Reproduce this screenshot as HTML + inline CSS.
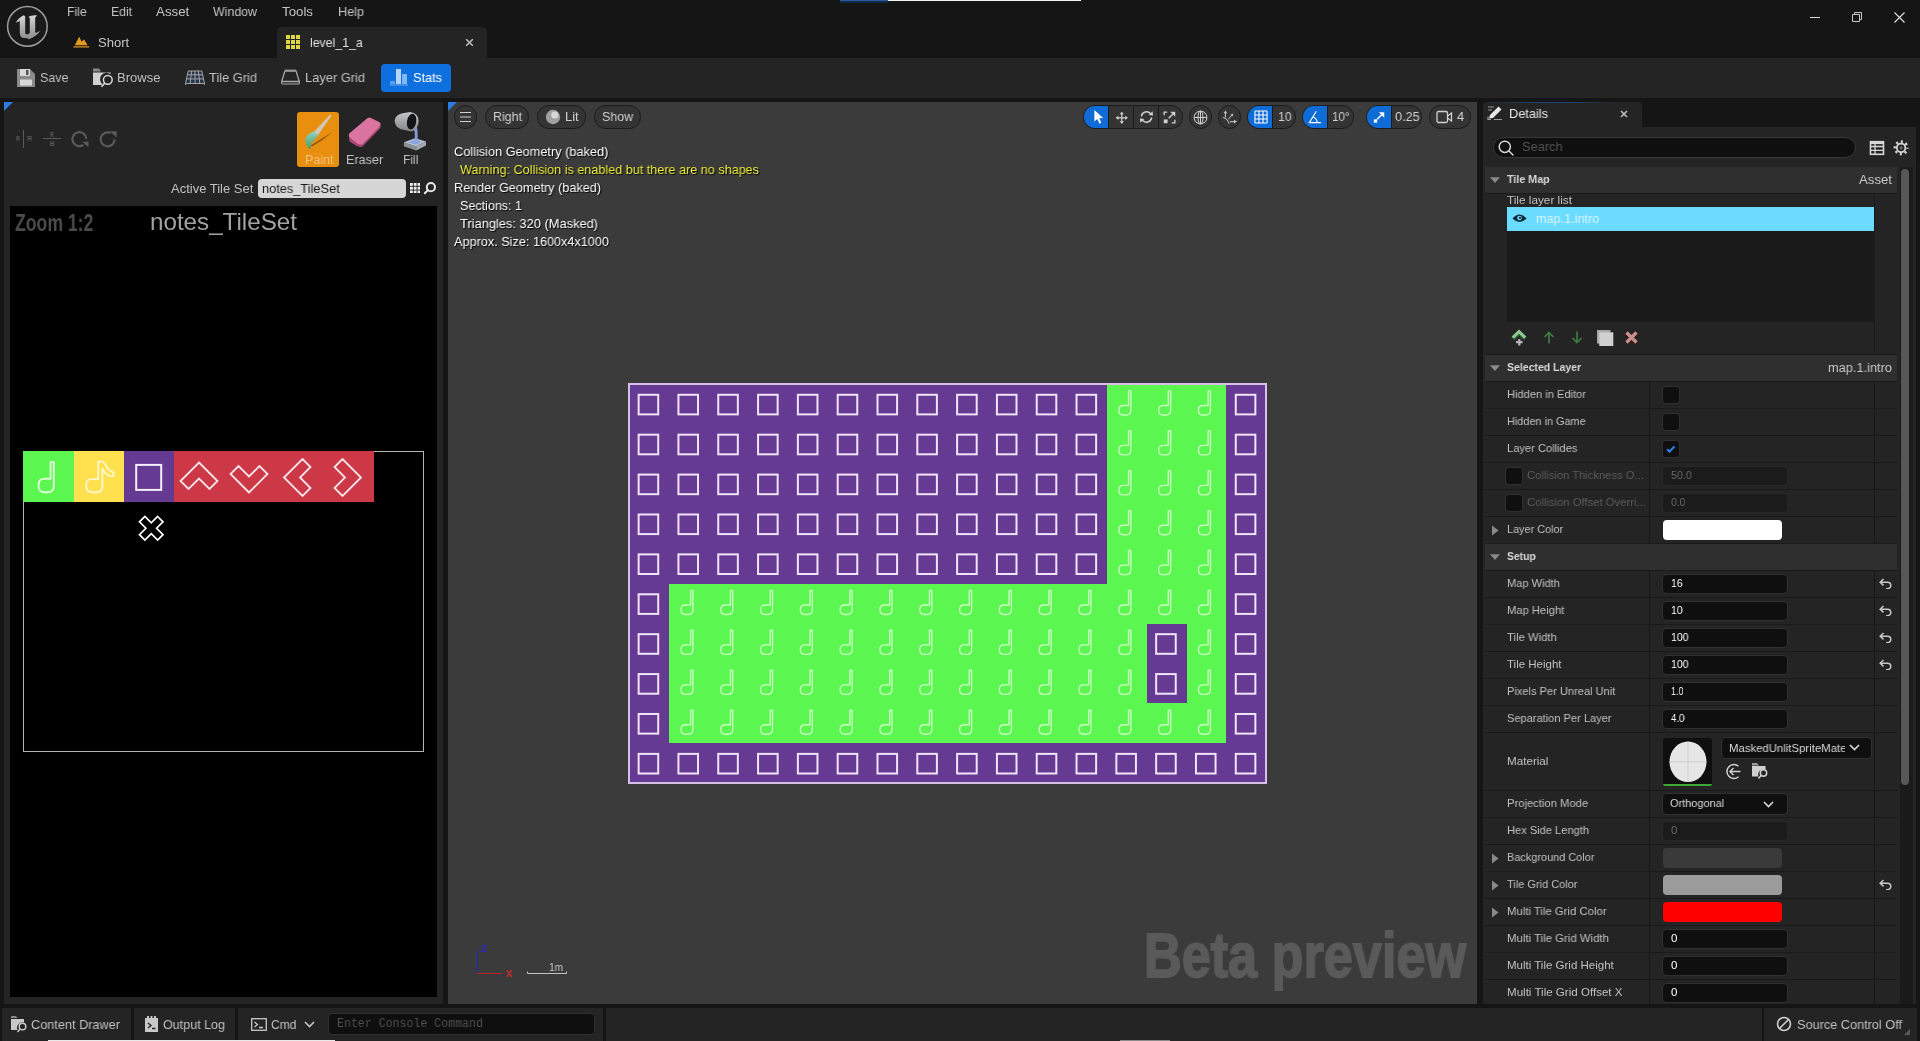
<!DOCTYPE html>
<html lang="en"><head><meta charset="utf-8"><title>level_1_a - Unreal Editor</title>
<style>
html,body{margin:0;padding:0;background:#151515;}
body{width:1920px;height:1041px;position:relative;overflow:hidden;font-family:"Liberation Sans",sans-serif;}
.g{position:absolute;left:0;top:0;width:0;height:0;display:block;}
.g>div,.g>svg,.g>span{position:absolute;}
span.t{will-change:transform;white-space:nowrap;line-height:20px;height:20px;transform-origin:0 50%;display:block;}

</style></head>
<body>
<header class="g" aria-label="Title bar and toolbar">
<div style="left:0px;top:0px;width:1920px;height:58px;background:#151515;"></div>
<div style="left:840px;top:0px;width:48px;height:1px;background:#2a5ea8;"></div>
<div style="left:840px;top:1px;width:48px;height:2px;background:#13294a;"></div>
<div style="left:888px;top:0px;width:193px;height:1px;background:#f4f4f4;"></div>
<svg style="left:0px;top:0px" width="54" height="54" viewBox="0 0 54 54"><defs><linearGradient id="lg" x1="0" y1="0" x2="0" y2="1"><stop offset="0" stop-color="#d4d4d4"/><stop offset="1" stop-color="#8c8c8c"/></linearGradient></defs><circle cx="27.400" cy="26.400" r="19.800" fill="#1a1a1a" stroke="#9c9c9c" stroke-width="1.500"/><path fill="url(#lg)" d="M15.500 23C17.500 19.500 20.500 16.500 23.800 15.200L25.200 16.600V32.200C25.200 34.200 26.500 34.800 28 34.200L29.800 33V18.800C29.800 17.600 29.200 17.200 28.200 17C30.500 15.600 34 14.800 37.200 15.400C35.800 16.200 35.200 17.200 35.200 18.600V31.500C35.200 32.600 36 33 37 32.600L40.200 30.800C38 34.500 33.500 37.500 29 39.300C27.500 38.200 26 37.800 24.500 38C21.500 38.200 19.800 36.200 19.800 33V21.200C18.500 21.400 17 22 15.500 23Z"/></svg>
<svg style="left:73px;top:34px" width="18" height="16" viewBox="0 0 18 16"><path d="M1.800 11.200 6.200 2.800 8.600 7.600 11.200 5.400 14.600 11.200z" fill="#e09a22"/><rect x=".5" y="12" width="15.700" height="1.700" fill="#a8741c"/></svg>
<div style="left:277px;top:27px;width:210px;height:31px;background:#242424;border-radius:5px 5px 0 0;"></div>
<svg style="left:286px;top:35px" width="15" height="15" viewBox="0 0 15 15" fill="#ddd642"><rect x="0" y="0" width="4" height="4"/><rect x="5" y="0" width="4" height="4"/><rect x="10" y="0" width="4" height="4"/><rect x="0" y="5" width="4" height="4"/><rect x="5" y="5" width="4" height="4"/><rect x="10" y="5" width="4" height="4"/><rect x="0" y="10" width="4" height="4"/><rect x="5" y="10" width="4" height="4"/><rect x="10" y="10" width="4" height="4"/></svg>
<svg style="left:465px;top:38px" width="9" height="9" viewBox="0 0 9 9"><path d="M1.200 1.200 7.800 7.800M7.800 1.200 1.200 7.800" stroke="#c0c0c0" stroke-width="1.5"/></svg>
<div style="left:1810px;top:17px;width:10.2px;height:1px;background:#d8d8d8;"></div>
<svg style="left:1852px;top:12px" width="10" height="10" viewBox="0 0 10 10" fill="none" stroke="#c8c8c8" stroke-width="1" stroke-linejoin="round"><rect x=".5" y="2.500" width="7" height="7"/><path d="M2.500 2.500V.5H9.500V7.500H7.500"/></svg>
<svg style="left:1894px;top:12px" width="11" height="11" viewBox="0 0 11 11"><path d="M.5.500 10.500 10.500M10.500.5.500 10.500" stroke="#e0e0e0" stroke-width="1.100"/></svg>
<div style="left:0px;top:58px;width:1920px;height:40px;background:#242424;"></div>
<svg style="left:17px;top:69px" width="18" height="18" viewBox="0 0 18 18"><path d="M0 0h13l5 5v13H0z" fill="#8a8a8a"/><rect x="3" y="0" width="10" height="7" fill="#d8d8d8"/><rect x="9" y="1" width="2.500" height="5" fill="#555"/><rect x="3" y="10.500" width="12" height="6" fill="#d8d8d8"/></svg>
<svg style="left:92px;top:67px" width="23" height="23" viewBox="0 0 23 23"><path d="M1 1.500h6l2 3H1z" fill="#8a8a8a"/><path d="M1 5.500h17.500v1.800a6.300 6.300 0 0 0-8.200 9.700l-1 1H1z" fill="#d0d0d0"/><circle cx="15.800" cy="12.800" r="4.400" fill="none" stroke="#d8d8d8" stroke-width="1.500"/><path d="M12.600 16.200 9.500 19.800" stroke="#d8d8d8" stroke-width="1.700"/></svg>
<svg style="left:185px;top:69px" width="20" height="17" viewBox="0 0 20 17" fill="none" stroke="#a4a4a4" stroke-width="1"><path d="M3.200 2h13.600l2.700 12.500H.5z" fill="#26344c"/><path d="M2.600 5.800h14.800M1.600 9.900h16.800M6.600 2 5.200 14.500M10 2v12.500M13.400 2l1.400 12.500"/><path d="M.5 14.500v1.500M19.500 14.500v1.500"/></svg>
<svg style="left:281px;top:69px" width="19" height="17" viewBox="0 0 19 17" fill="none" stroke="#a8a8a8"><path d="M4 1.800h11l3.300 10.700H.7z" stroke-width="1.300"/><path d="M4 1.600h11" stroke-width="2" stroke="#9a9a9a"/><path d="M.7 12.500v2.500h17.600v-2.500" stroke-width="1"/></svg>
<div style="left:381px;top:64px;width:70px;height:28px;background:#0e6fde;border-radius:4px;"></div>
<svg style="left:390px;top:68px" width="19" height="19" viewBox="0 0 19 19"><path d="M0 13h5v5H0z" fill="#5aa2ee"/><path d="M6 1h5v17H6z" fill="#b5d5f8"/><path d="M12 6h5v12h-5z" fill="#7fb8f2"/><path d="M0 16h18v2H0z" fill="#3f8de6"/></svg>
<div style="left:0px;top:98px;width:1920px;height:909px;background:#151515;"></div>
<span class="t" style="left:67px;top:1.50px;font-size:13px;color:#c4c4c4;transform:scaleX(0.9402);">File</span>
<span class="t" style="left:111px;top:1.50px;font-size:13px;color:#c4c4c4;transform:scaleX(0.9372);">Edit</span>
<span class="t" style="left:156px;top:1.50px;font-size:13px;color:#c4c4c4;transform:scaleX(1.0241);">Asset</span>
<span class="t" style="left:213.3px;top:1.50px;font-size:13px;color:#c4c4c4;transform:scaleX(0.9514);">Window</span>
<span class="t" style="left:282.3px;top:1.50px;font-size:13px;color:#c4c4c4;transform:scaleX(1.0211);">Tools</span>
<span class="t" style="left:338px;top:1.50px;font-size:13px;color:#c4c4c4;transform:scaleX(0.9720);">Help</span>
<span class="t" style="left:98.3px;top:32.50px;font-size:13px;color:#c4c4c4;transform:scaleX(0.9975);">Short</span>
<span class="t" style="left:310px;top:32.50px;font-size:13px;color:#e0e0e0;transform:scaleX(0.9469);">level_1_a</span>
<span class="t" style="left:40.3px;top:67.50px;font-size:13px;color:#c0c0c0;transform:scaleX(0.9581);">Save</span>
<span class="t" style="left:117.3px;top:67.50px;font-size:13px;color:#c0c0c0;transform:scaleX(1.0009);">Browse</span>
<span class="t" style="left:209.3px;top:67.50px;font-size:13px;color:#c0c0c0;transform:scaleX(0.9868);">Tile Grid</span>
<span class="t" style="left:305.3px;top:67.50px;font-size:13px;color:#c0c0c0;transform:scaleX(0.9884);">Layer Grid</span>
<span class="t" style="left:413.3px;top:67.50px;font-size:13px;color:#ffffff;transform:scaleX(0.9789);">Stats</span>
</header>
<aside class="g" aria-label="Tile set palette">
<div style="left:4px;top:102px;width:439px;height:902px;background:#242424;"></div>
<svg style="left:4px;top:102px" width="9" height="9"><path d="M0 0h9L0 9z" fill="#2b7be0"/></svg>
<div style="left:23.2px;top:130px;width:1.2px;height:18px;background:#5a5a5a;"></div>
<div style="left:42.5px;top:138px;width:18px;height:1.2px;background:#5a5a5a;"></div>
<svg style="left:70px;top:129px" width="21" height="21" viewBox="0 0 21 21" fill="none" stroke="#5a5a5a" stroke-width="2.200"><path d="M13.500 15.800A7 7 0 1 1 16.400 10"/><path d="M12.200 12.800h6.300v5.400z" fill="#5a5a5a" stroke="none"/></svg>
<svg style="left:98px;top:129px" width="21" height="21" viewBox="0 0 21 21" fill="none" stroke="#5a5a5a" stroke-width="2.200"><path d="M12.600 4A7 7 0 1 0 16.600 10.400"/><path d="M12 2.200h6.600v6.400z" fill="#5a5a5a" stroke="none"/></svg>
<div style="left:297px;top:112px;width:42px;height:55px;background:#e88f10;border-radius:3px;"></div>
<svg style="left:297px;top:112px" width="42" height="42" viewBox="0 0 42 42"><defs><linearGradient id="br" x1="0" y1="0" x2="0" y2="1"><stop offset="0" stop-color="#8fd0c0"/><stop offset="1" stop-color="#4f9a58"/></linearGradient></defs><path d="M13.500 33.500 Q24 27 35.600 20 Q26 28.500 15 34.500z" fill="#7a4a0c" opacity=".8"/><path d="M16.600 20.200 L33.200 2.400 L34.600 3.400 L20.800 23.600z" fill="#cfc8b6"/><path d="M17 19.500 Q8.500 22 8.200 28 Q8.600 34 13.300 37.400 Q13 31 21.500 23.200z" fill="url(#br)"/></svg>
<svg style="left:346px;top:114px" width="38" height="36" viewBox="0 0 38 36"><path d="M3 24 L3.500 27.500 Q12 33.500 16 33 L34.500 14 L34.500 10.500 Z" fill="#a84872"/><path d="M3 23 Q2 20 5 18 L21 4.500 Q23 3 25 4 L33 8 Q35.500 9.500 34 12 L17 29.500 Q15 31 12 30 Z" fill="#dc74a2"/></svg>
<svg style="left:393px;top:110px" width="36" height="42" viewBox="0 0 36 42"><defs><linearGradient id="bk" x1="0" y1="0" x2="0" y2="1"><stop offset="0" stop-color="#c4c4c6"/><stop offset="1" stop-color="#84868a"/></linearGradient></defs><path d="M10.900 32.300 23.200 36.400 23.200 40.400 10.900 36.200z" fill="#8a9096"/><path d="M23.200 36.400 33 31.600 33 35.600 23.200 40.400z" fill="#a4aab0"/><path d="M10.900 32.300 22 28.300 33 31.600 23.200 36.400z" fill="#b8c2d0"/><path d="M14.800 32.300 22 29.700 29.300 31.700 23.100 34.700z" fill="#8aa4de"/><path d="M19.400 16 Q22.500 20 21.600 31 L24.600 31 Q25.200 21 23.400 15z" fill="#88a2e4" opacity=".92"/><path d="M1.700 10.500 Q2.500 4.500 9.500 3.200 L17 2.100 Q25.500 3 25.600 11.500 Q25 19.500 18.500 21.600 L8 19.200 Q1.500 16.500 1.700 10.500z" fill="url(#bk)"/><ellipse cx="18.600" cy="11.600" rx="4.600" ry="8" fill="#121418" transform="rotate(10 18.600 11.600)"/></svg>
<div style="left:258px;top:179px;width:148px;height:19px;background:#d6d6d6;border-radius:4px;"></div>
<svg style="left:410px;top:183px" width="10.400" height="10.400" viewBox="0 0 11 11" fill="#f0f0f0"><rect x="0" y="0" width="3" height="3"/><rect x="4" y="0" width="3" height="3"/><rect x="8" y="0" width="3" height="3"/><rect x="0" y="4" width="3" height="3"/><rect x="4" y="4" width="3" height="3"/><rect x="8" y="4" width="3" height="3"/><rect x="0" y="8" width="3" height="3"/><rect x="4" y="8" width="3" height="3"/><rect x="8" y="8" width="3" height="3"/></svg>
<svg style="left:423px;top:181px" width="14" height="14" viewBox="0 0 14 14" fill="none" stroke="#e8e8e8" stroke-width="2"><circle cx="7.900" cy="6.200" r="4.100"/><path d="M4.800 9.300 1.800 12.300" stroke-linecap="round"/></svg>
<div style="left:10px;top:206px;width:427px;height:791px;background:#000000;"></div>
<div style="left:23px;top:451px;width:400.8px;height:301px;background:transparent;box-sizing:border-box;border:1px solid #b4b4b4;"></div>
<div style="left:23.1px;top:451px;width:50.65px;height:51px;background:#5cf650;"></div>
<div style="left:73.75px;top:451px;width:50.2px;height:51px;background:#ffe14f;"></div>
<div style="left:123.75px;top:451px;width:50.2px;height:51px;background:#653a92;"></div>
<div style="left:173.75px;top:451px;width:50.2px;height:51px;background:#cc3846;"></div>
<div style="left:223.75px;top:451px;width:50.2px;height:51px;background:#cc3846;"></div>
<div style="left:273.75px;top:451px;width:50.2px;height:51px;background:#cc3846;"></div>
<div style="left:323.75px;top:451px;width:50.2px;height:51px;background:#cc3846;"></div>
<svg style="left:23.2px;top:451.5px" width="50" height="50" viewBox="0 0 50 50" fill="none" stroke="#dfffd8" stroke-width="1.90" stroke-linejoin="round"><path d="M27.600 9.900h3.200v24.400q0 6-6 6h-3.200q-6 0-6-6v-1.500q0-6 6-6h6z"/></svg>
<svg style="left:73.500px;top:451.500px" width="50" height="50" viewBox="0 0 50 50" fill="none" stroke="#fff7d0" stroke-width="1.800" stroke-linejoin="round"><path d="M24.200 9.600h4.200l2.600 2 2.800 5.400 5.600 3.400v3.800h-3.600l-4.600-3.200-2.800-4.200v17.500q0 6-6 6h-4.200q-6 0-6-6v-1.200q0-6 6-6h6z"/></svg>
<svg style="left:123.500px;top:451.500px" width="50" height="50" viewBox="0 0 50 50" fill="none" stroke="#f6eefc" stroke-width="2"><rect x="12.200" y="12.900" width="25" height="25"/></svg>
<svg style="left:173.5px;top:451.5px" width="50" height="50" viewBox="0 0 50 50" fill="none" stroke="#fbe6ea" stroke-width="1.800" stroke-linejoin="miter"><path transform="rotate(0 25 25.500)" d="M25 10.500 43.500 29 35.500 37 25 26.500 14.500 37 6.500 29z"/></svg>
<svg style="left:223.5px;top:451.5px" width="50" height="50" viewBox="0 0 50 50" fill="none" stroke="#fbe6ea" stroke-width="1.800" stroke-linejoin="miter"><path transform="rotate(180 25 25.500)" d="M25 10.500 43.500 29 35.500 37 25 26.500 14.500 37 6.500 29z"/></svg>
<svg style="left:274.3px;top:451.5px" width="50" height="50" viewBox="0 0 50 50" fill="none" stroke="#fbe6ea" stroke-width="1.800" stroke-linejoin="miter"><path transform="rotate(-90 25 25.500)" d="M25 10.500 43.500 29 35.500 37 25 26.500 14.500 37 6.500 29z"/></svg>
<svg style="left:321px;top:451.5px" width="50" height="50" viewBox="0 0 50 50" fill="none" stroke="#fbe6ea" stroke-width="1.800" stroke-linejoin="miter"><path transform="rotate(90 25 25.500)" d="M25 10.500 43.500 29 35.500 37 25 26.500 14.500 37 6.500 29z"/></svg>
<svg style="left:137px;top:514.200px" width="28.500" height="28.500" viewBox="0 0 30 30" fill="#000" stroke="#ffffff" stroke-width="1.800" stroke-linejoin="miter"><path transform="rotate(45 15 15)" d="M11 1.500h8v9.500h9.500v8h-9.500v9.500h-8v-9.500h-9.500v-8h9.500z"/></svg>
<span class="t" style="left:16.3px;top:129.20px;font-size:6.5px;color:#5a5a5a;font-weight:700;transform:scaleX(0.8505);">R</span>
<span class="t" style="left:27px;top:129.20px;font-size:6.5px;color:#5a5a5a;font-weight:700;transform:scaleX(0.8505);transform:scaleX(-1);transform-origin:50% 50%;">R</span>
<span class="t" style="left:49.7px;top:124.60px;font-size:6.5px;color:#5a5a5a;font-weight:700;transform:scaleX(0.8505);">R</span>
<span class="t" style="left:49.7px;top:133.20px;font-size:6.5px;color:#5a5a5a;font-weight:700;transform:scaleX(0.8505);transform:scaleY(-1);transform-origin:50% 50%;">R</span>
<span class="t" style="left:304.7px;top:149.50px;font-size:13px;color:#f4c27c;transform:scaleX(0.9615);">Paint</span>
<span class="t" style="left:346px;top:149.50px;font-size:13px;color:#c0c0c0;transform:scaleX(0.9687);">Eraser</span>
<span class="t" style="left:403.3px;top:149.50px;font-size:13px;color:#c0c0c0;transform:scaleX(0.9272);">Fill</span>
<span class="t" style="left:171px;top:178.50px;font-size:13px;color:#c0c0c0;transform:scaleX(0.9991);">Active Tile Set</span>
<span class="t" style="left:262.3px;top:178.50px;font-size:13px;color:#1a1a1a;transform:scaleX(0.9833);">notes_TileSet</span>
<span class="t" style="left:15px;top:212.80px;font-size:23px;color:#4b4b4b;font-weight:700;transform:scaleX(0.7659);">Zoom 1:2</span>
<span class="t" style="left:149.7px;top:211.50px;font-size:24px;color:#a2a2a2;transform:scaleX(1.0077);">notes_TileSet</span>
</aside>
<main class="g" aria-label="Tile map viewport">
<div style="left:448px;top:102px;width:1029px;height:902px;background:#3b3b3b;"></div>
<svg style="left:448px;top:102px" width="9" height="9"><path d="M0 0h9L0 9z" fill="#2b7be0"/></svg>
<div style="left:454px;top:105.2px;width:23px;height:23.4px;background:#343434;box-sizing:border-box;border:1px solid #1b1b1b;border-radius:11.700px;overflow:hidden;"></div>
<svg style="left:459px;top:111px" width="13" height="12" viewBox="0 0 13 12" stroke="#d0d0d0" stroke-width="1.100"><path d="M1 1.500h11M1 6h11M1 10.500h11"/></svg>
<div style="left:485.3px;top:105.2px;width:43.69999999999999px;height:23.4px;background:#343434;box-sizing:border-box;border:1px solid #1b1b1b;border-radius:11.700px;overflow:hidden;"></div>
<div style="left:537.3px;top:105.2px;width:48.40000000000009px;height:23.4px;background:#343434;box-sizing:border-box;border:1px solid #1b1b1b;border-radius:11.700px;overflow:hidden;"></div>
<svg style="left:545px;top:109px" width="16" height="16" viewBox="0 0 16 16"><circle cx="8" cy="8" r="7.200" fill="#a0a0a0"/><circle cx="9.800" cy="6" r="3.600" fill="#d8d8d8"/></svg>
<div style="left:594.3px;top:105.2px;width:46.700000000000045px;height:23.4px;background:#343434;box-sizing:border-box;border:1px solid #1b1b1b;border-radius:11.700px;overflow:hidden;"></div>
<div style="left:1083px;top:105.2px;width:99.59999999999991px;height:23.4px;background:#343434;box-sizing:border-box;border:1px solid #1b1b1b;border-radius:11.700px;overflow:hidden;"></div>
<div style="left:1084px;top:106.2px;width:24.299999999999955px;height:21.4px;background:#0f6bd6;border-radius:10.700px 0 0 10.700px;"></div>
<div style="left:1108.3px;top:106.2px;width:1px;height:21.4px;background:#1b1b1b;"></div>
<div style="left:1133.4px;top:106px;width:1px;height:22px;background:#1b1b1b;"></div>
<div style="left:1158.2px;top:106px;width:1px;height:22px;background:#1b1b1b;"></div>
<svg style="left:1092.800px;top:108.800px" width="12" height="16" viewBox="0 0 13 17"><path d="M1.500 1v12.500l3.200-2.800 2.300 5 2-1-2.300-4.800 4.300-.2z" fill="#ffffff"/></svg>
<svg style="left:1114.800px;top:110.600px" width="13.600" height="13.600" viewBox="0 0 17 17" fill="none" stroke="#d0d0d0" stroke-width="1.500"><path d="M8.500 3.500v10M3.500 8.500h10"/><path d="M5.800 4.200 8.500 .8l2.700 3.400zM5.800 12.800l2.700 3.400 2.700-3.400zM4.200 5.800.8 8.500l3.400 2.700zM12.800 5.800l3.400 2.700-3.400 2.700z" fill="#d0d0d0" stroke="none"/></svg>
<svg style="left:1139px;top:110px" width="15" height="14" viewBox="0 0 17 16" fill="none" stroke="#d0d0d0" stroke-width="1.700"><path d="M2.600 7.200A6 6 0 0 1 13.200 4.400M14.400 8.800A6 6 0 0 1 3.800 11.600"/><path d="M11 5.800 16 6.400 15.400 1.400zM6 10.200 1 9.600 1.600 14.600z" fill="#d0d0d0" stroke="none"/></svg>
<svg style="left:1162.600px;top:111px" width="13" height="13" viewBox="0 0 17 17" fill="none" stroke="#d0d0d0" stroke-width="1.700"><path d="M1.500 5.500V1.500h4M15.500 11.500v4h-4"/><path d="M14 3 7.500 9.500" stroke-width="2"/><path d="M9.500 1h6.500v6.500z" fill="#d0d0d0" stroke="none"/><rect x="1" y="11" width="5" height="5" fill="#d0d0d0" stroke="none"/></svg>
<div style="left:1188.9px;top:105.2px;width:23.199999999999818px;height:23.4px;background:#343434;box-sizing:border-box;border:1px solid #1b1b1b;border-radius:11.700px;overflow:hidden;"></div>
<svg style="left:1193px;top:110px" width="15" height="15" viewBox="0 0 15 15" fill="none" stroke="#d0d0d0" stroke-width="1"><circle cx="7.500" cy="7.500" r="6.400"/><ellipse cx="7.500" cy="7.500" rx="2.500" ry="6.400"/><path d="M1.100 7.500h12.800M7.500 1.100v12.800"/></svg>
<div style="left:1217.8px;top:105.2px;width:23.200000000000045px;height:23.4px;background:#343434;box-sizing:border-box;border:1px solid #1b1b1b;border-radius:11.700px;overflow:hidden;"></div>
<svg style="left:1221px;top:108px" width="18" height="18" viewBox="0 0 18 18" fill="none" stroke="#d0d0d0" stroke-width="1"><path d="M2.100 9.500Q6.500 10.500 8.200 15.600M4.400 9.400V4.500M7.200 11.400 10.600 7.500M8.900 13.700H13.500"/><path d="M2.800 5.200 4.500 2.400 6.200 5.200zM9.400 6.800 12.400 5.400 11.400 8.600zM13 11.800 15.800 13.600 13 15.400z" fill="#d0d0d0" stroke="none"/></svg>
<div style="left:1246.9px;top:105.2px;width:48.899999999999864px;height:23.4px;background:#343434;box-sizing:border-box;border:1px solid #1b1b1b;border-radius:11.700px;overflow:hidden;"></div>
<div style="left:1247.9px;top:106.2px;width:24.09999999999991px;height:21.4px;background:#0f6bd6;border-radius:10.700px 0 0 10.700px;"></div>
<div style="left:1272px;top:106.2px;width:1px;height:21.4px;background:#1b1b1b;"></div>
<svg style="left:1253.500px;top:110.200px" width="14" height="14" viewBox="0 0 15 15" fill="none" stroke="#ffffff" stroke-width="1.150"><rect x="1" y="1" width="13" height="13" rx=".8"/><path d="M5.300 1v13M9.700 1v13M1 5.300h13M1 9.700h13"/></svg>
<div style="left:1301.7px;top:105.2px;width:52.09999999999991px;height:23.4px;background:#343434;box-sizing:border-box;border:1px solid #1b1b1b;border-radius:11.700px;overflow:hidden;"></div>
<div style="left:1302.7px;top:106.2px;width:24.299999999999955px;height:21.4px;background:#0f6bd6;border-radius:10.700px 0 0 10.700px;"></div>
<div style="left:1327px;top:106.2px;width:1px;height:21.4px;background:#1b1b1b;"></div>
<svg style="left:1308px;top:110px" width="14" height="14" viewBox="0 0 16 16" fill="none" stroke="#ffffff" stroke-width="1.300"><path d="M9.500 1.500 1.500 14.500h13.500"/><path d="M5.500 8a7 7 0 0 1 5 6.500"/></svg>
<div style="left:1366px;top:105.2px;width:56.40000000000009px;height:23.4px;background:#343434;box-sizing:border-box;border:1px solid #1b1b1b;border-radius:11.700px;overflow:hidden;"></div>
<div style="left:1367px;top:106.2px;width:24.40000000000009px;height:21.4px;background:#0f6bd6;border-radius:10.700px 0 0 10.700px;"></div>
<div style="left:1391.4px;top:106.2px;width:1px;height:21.4px;background:#1b1b1b;"></div>
<svg style="left:1372.800px;top:110.800px" width="12.500" height="12.500" viewBox="0 0 15 15" fill="none" stroke="#ffffff" stroke-width="1.800"><path d="M5 10 11 4"/><path d="M7 1.500h6.500V8z" fill="#fff" stroke="none"/><rect x="1" y="10" width="4" height="4" fill="#fff" stroke="none"/></svg>
<div style="left:1429.4px;top:105.2px;width:41.5px;height:23.4px;background:#343434;box-sizing:border-box;border:1px solid #1b1b1b;border-radius:11.700px;overflow:hidden;"></div>
<svg style="left:1436px;top:110px" width="17" height="14" viewBox="0 0 17 14" fill="none" stroke="#d0d0d0" stroke-width="1.300"><rect x="1" y="1.500" width="10.500" height="11" rx="1.500"/><path d="M11.500 6 15.500 3v8l-4-3"/></svg>
<div style="left:629.3px;top:384.2px;width:636.96px;height:399.0px;background:#653a92;"></div>
<div style="left:1107.02px;top:384.2px;width:119.43px;height:199.5px;background:#5cf650;"></div>
<div style="left:669.11px;top:583.7px;width:557.34px;height:159.6px;background:#5cf650;"></div>
<div style="left:1146.83px;top:623.6px;width:39.81px;height:79.8px;background:#653a92;"></div>
<svg style="left:629.3px;top:384.2px" width="636.96" height="399.00" viewBox="0 0 800 500" preserveAspectRatio="none" fill="none"><g stroke="#f1e4fa" stroke-width="2.500"><rect x="12.1" y="13.5" width="24.600" height="24.600"/><rect x="62.1" y="13.5" width="24.600" height="24.600"/><rect x="112.1" y="13.5" width="24.600" height="24.600"/><rect x="162.1" y="13.5" width="24.600" height="24.600"/><rect x="212.1" y="13.5" width="24.600" height="24.600"/><rect x="262.1" y="13.5" width="24.600" height="24.600"/><rect x="312.1" y="13.5" width="24.600" height="24.600"/><rect x="362.1" y="13.5" width="24.600" height="24.600"/><rect x="412.1" y="13.5" width="24.600" height="24.600"/><rect x="462.1" y="13.5" width="24.600" height="24.600"/><rect x="512.1" y="13.5" width="24.600" height="24.600"/><rect x="562.1" y="13.5" width="24.600" height="24.600"/><rect x="762.1" y="13.5" width="24.600" height="24.600"/><rect x="12.1" y="63.5" width="24.600" height="24.600"/><rect x="62.1" y="63.5" width="24.600" height="24.600"/><rect x="112.1" y="63.5" width="24.600" height="24.600"/><rect x="162.1" y="63.5" width="24.600" height="24.600"/><rect x="212.1" y="63.5" width="24.600" height="24.600"/><rect x="262.1" y="63.5" width="24.600" height="24.600"/><rect x="312.1" y="63.5" width="24.600" height="24.600"/><rect x="362.1" y="63.5" width="24.600" height="24.600"/><rect x="412.1" y="63.5" width="24.600" height="24.600"/><rect x="462.1" y="63.5" width="24.600" height="24.600"/><rect x="512.1" y="63.5" width="24.600" height="24.600"/><rect x="562.1" y="63.5" width="24.600" height="24.600"/><rect x="762.1" y="63.5" width="24.600" height="24.600"/><rect x="12.1" y="113.5" width="24.600" height="24.600"/><rect x="62.1" y="113.5" width="24.600" height="24.600"/><rect x="112.1" y="113.5" width="24.600" height="24.600"/><rect x="162.1" y="113.5" width="24.600" height="24.600"/><rect x="212.1" y="113.5" width="24.600" height="24.600"/><rect x="262.1" y="113.5" width="24.600" height="24.600"/><rect x="312.1" y="113.5" width="24.600" height="24.600"/><rect x="362.1" y="113.5" width="24.600" height="24.600"/><rect x="412.1" y="113.5" width="24.600" height="24.600"/><rect x="462.1" y="113.5" width="24.600" height="24.600"/><rect x="512.1" y="113.5" width="24.600" height="24.600"/><rect x="562.1" y="113.5" width="24.600" height="24.600"/><rect x="762.1" y="113.5" width="24.600" height="24.600"/><rect x="12.1" y="163.5" width="24.600" height="24.600"/><rect x="62.1" y="163.5" width="24.600" height="24.600"/><rect x="112.1" y="163.5" width="24.600" height="24.600"/><rect x="162.1" y="163.5" width="24.600" height="24.600"/><rect x="212.1" y="163.5" width="24.600" height="24.600"/><rect x="262.1" y="163.5" width="24.600" height="24.600"/><rect x="312.1" y="163.5" width="24.600" height="24.600"/><rect x="362.1" y="163.5" width="24.600" height="24.600"/><rect x="412.1" y="163.5" width="24.600" height="24.600"/><rect x="462.1" y="163.5" width="24.600" height="24.600"/><rect x="512.1" y="163.5" width="24.600" height="24.600"/><rect x="562.1" y="163.5" width="24.600" height="24.600"/><rect x="762.1" y="163.5" width="24.600" height="24.600"/><rect x="12.1" y="213.5" width="24.600" height="24.600"/><rect x="62.1" y="213.5" width="24.600" height="24.600"/><rect x="112.1" y="213.5" width="24.600" height="24.600"/><rect x="162.1" y="213.5" width="24.600" height="24.600"/><rect x="212.1" y="213.5" width="24.600" height="24.600"/><rect x="262.1" y="213.5" width="24.600" height="24.600"/><rect x="312.1" y="213.5" width="24.600" height="24.600"/><rect x="362.1" y="213.5" width="24.600" height="24.600"/><rect x="412.1" y="213.5" width="24.600" height="24.600"/><rect x="462.1" y="213.5" width="24.600" height="24.600"/><rect x="512.1" y="213.5" width="24.600" height="24.600"/><rect x="562.1" y="213.5" width="24.600" height="24.600"/><rect x="762.1" y="213.5" width="24.600" height="24.600"/><rect x="12.1" y="263.5" width="24.600" height="24.600"/><rect x="762.1" y="263.5" width="24.600" height="24.600"/><rect x="12.1" y="313.5" width="24.600" height="24.600"/><rect x="662.1" y="313.5" width="24.600" height="24.600"/><rect x="762.1" y="313.5" width="24.600" height="24.600"/><rect x="12.1" y="363.5" width="24.600" height="24.600"/><rect x="662.1" y="363.5" width="24.600" height="24.600"/><rect x="762.1" y="363.5" width="24.600" height="24.600"/><rect x="12.1" y="413.5" width="24.600" height="24.600"/><rect x="762.1" y="413.5" width="24.600" height="24.600"/><rect x="12.1" y="463.5" width="24.600" height="24.600"/><rect x="62.1" y="463.5" width="24.600" height="24.600"/><rect x="112.1" y="463.5" width="24.600" height="24.600"/><rect x="162.1" y="463.5" width="24.600" height="24.600"/><rect x="212.1" y="463.5" width="24.600" height="24.600"/><rect x="262.1" y="463.5" width="24.600" height="24.600"/><rect x="312.1" y="463.5" width="24.600" height="24.600"/><rect x="362.1" y="463.5" width="24.600" height="24.600"/><rect x="412.1" y="463.5" width="24.600" height="24.600"/><rect x="462.1" y="463.5" width="24.600" height="24.600"/><rect x="512.1" y="463.5" width="24.600" height="24.600"/><rect x="562.1" y="463.5" width="24.600" height="24.600"/><rect x="612.1" y="463.5" width="24.600" height="24.600"/><rect x="662.1" y="463.5" width="24.600" height="24.600"/><rect x="712.1" y="463.5" width="24.600" height="24.600"/><rect x="762.1" y="463.5" width="24.600" height="24.600"/></g><g stroke="#ccffc4" stroke-width="1.700" stroke-linejoin="round"><path transform="translate(600 0)" d="M27.400 8.600h2.900v24.300q0 6-6 6h-3.600q-5.500 0-5.500-5.900 0-6 6-6h6.200z"/><path transform="translate(650 0)" d="M27.400 8.600h2.900v24.300q0 6-6 6h-3.600q-5.500 0-5.500-5.900 0-6 6-6h6.200z"/><path transform="translate(700 0)" d="M27.400 8.600h2.900v24.300q0 6-6 6h-3.600q-5.500 0-5.500-5.900 0-6 6-6h6.200z"/><path transform="translate(600 50)" d="M27.400 8.600h2.900v24.300q0 6-6 6h-3.600q-5.500 0-5.500-5.900 0-6 6-6h6.200z"/><path transform="translate(650 50)" d="M27.400 8.600h2.900v24.300q0 6-6 6h-3.600q-5.500 0-5.500-5.900 0-6 6-6h6.200z"/><path transform="translate(700 50)" d="M27.400 8.600h2.900v24.300q0 6-6 6h-3.600q-5.500 0-5.500-5.900 0-6 6-6h6.200z"/><path transform="translate(600 100)" d="M27.400 8.600h2.900v24.300q0 6-6 6h-3.600q-5.500 0-5.500-5.900 0-6 6-6h6.200z"/><path transform="translate(650 100)" d="M27.400 8.600h2.900v24.300q0 6-6 6h-3.600q-5.500 0-5.500-5.900 0-6 6-6h6.200z"/><path transform="translate(700 100)" d="M27.400 8.600h2.900v24.300q0 6-6 6h-3.600q-5.500 0-5.500-5.900 0-6 6-6h6.200z"/><path transform="translate(600 150)" d="M27.400 8.600h2.900v24.300q0 6-6 6h-3.600q-5.500 0-5.500-5.900 0-6 6-6h6.200z"/><path transform="translate(650 150)" d="M27.400 8.600h2.900v24.300q0 6-6 6h-3.600q-5.500 0-5.500-5.900 0-6 6-6h6.200z"/><path transform="translate(700 150)" d="M27.400 8.600h2.900v24.300q0 6-6 6h-3.600q-5.500 0-5.500-5.900 0-6 6-6h6.200z"/><path transform="translate(600 200)" d="M27.400 8.600h2.900v24.300q0 6-6 6h-3.600q-5.500 0-5.500-5.900 0-6 6-6h6.200z"/><path transform="translate(650 200)" d="M27.400 8.600h2.900v24.300q0 6-6 6h-3.600q-5.500 0-5.500-5.900 0-6 6-6h6.200z"/><path transform="translate(700 200)" d="M27.400 8.600h2.900v24.300q0 6-6 6h-3.600q-5.500 0-5.500-5.900 0-6 6-6h6.200z"/><path transform="translate(50 250)" d="M27.400 8.600h2.900v24.300q0 6-6 6h-3.600q-5.500 0-5.500-5.900 0-6 6-6h6.200z"/><path transform="translate(100 250)" d="M27.400 8.600h2.900v24.300q0 6-6 6h-3.600q-5.500 0-5.500-5.900 0-6 6-6h6.200z"/><path transform="translate(150 250)" d="M27.400 8.600h2.900v24.300q0 6-6 6h-3.600q-5.500 0-5.500-5.900 0-6 6-6h6.200z"/><path transform="translate(200 250)" d="M27.400 8.600h2.900v24.300q0 6-6 6h-3.600q-5.500 0-5.500-5.900 0-6 6-6h6.200z"/><path transform="translate(250 250)" d="M27.400 8.600h2.900v24.300q0 6-6 6h-3.600q-5.500 0-5.500-5.900 0-6 6-6h6.200z"/><path transform="translate(300 250)" d="M27.400 8.600h2.900v24.300q0 6-6 6h-3.600q-5.500 0-5.500-5.900 0-6 6-6h6.200z"/><path transform="translate(350 250)" d="M27.400 8.600h2.900v24.300q0 6-6 6h-3.600q-5.500 0-5.500-5.900 0-6 6-6h6.200z"/><path transform="translate(400 250)" d="M27.400 8.600h2.900v24.300q0 6-6 6h-3.600q-5.500 0-5.500-5.900 0-6 6-6h6.200z"/><path transform="translate(450 250)" d="M27.400 8.600h2.900v24.300q0 6-6 6h-3.600q-5.500 0-5.500-5.900 0-6 6-6h6.200z"/><path transform="translate(500 250)" d="M27.400 8.600h2.900v24.300q0 6-6 6h-3.600q-5.500 0-5.500-5.900 0-6 6-6h6.200z"/><path transform="translate(550 250)" d="M27.400 8.600h2.900v24.300q0 6-6 6h-3.600q-5.500 0-5.500-5.900 0-6 6-6h6.200z"/><path transform="translate(600 250)" d="M27.400 8.600h2.900v24.300q0 6-6 6h-3.600q-5.500 0-5.500-5.900 0-6 6-6h6.200z"/><path transform="translate(650 250)" d="M27.400 8.600h2.900v24.300q0 6-6 6h-3.600q-5.500 0-5.500-5.900 0-6 6-6h6.200z"/><path transform="translate(700 250)" d="M27.400 8.600h2.900v24.300q0 6-6 6h-3.600q-5.500 0-5.500-5.900 0-6 6-6h6.200z"/><path transform="translate(50 300)" d="M27.400 8.600h2.900v24.300q0 6-6 6h-3.600q-5.500 0-5.500-5.900 0-6 6-6h6.200z"/><path transform="translate(100 300)" d="M27.400 8.600h2.900v24.300q0 6-6 6h-3.600q-5.500 0-5.500-5.900 0-6 6-6h6.200z"/><path transform="translate(150 300)" d="M27.400 8.600h2.900v24.300q0 6-6 6h-3.600q-5.500 0-5.500-5.900 0-6 6-6h6.200z"/><path transform="translate(200 300)" d="M27.400 8.600h2.900v24.300q0 6-6 6h-3.600q-5.500 0-5.500-5.900 0-6 6-6h6.200z"/><path transform="translate(250 300)" d="M27.400 8.600h2.900v24.300q0 6-6 6h-3.600q-5.500 0-5.500-5.900 0-6 6-6h6.200z"/><path transform="translate(300 300)" d="M27.400 8.600h2.900v24.300q0 6-6 6h-3.600q-5.500 0-5.500-5.900 0-6 6-6h6.200z"/><path transform="translate(350 300)" d="M27.400 8.600h2.900v24.300q0 6-6 6h-3.600q-5.500 0-5.500-5.900 0-6 6-6h6.200z"/><path transform="translate(400 300)" d="M27.400 8.600h2.900v24.300q0 6-6 6h-3.600q-5.500 0-5.500-5.900 0-6 6-6h6.200z"/><path transform="translate(450 300)" d="M27.400 8.600h2.900v24.300q0 6-6 6h-3.600q-5.500 0-5.500-5.900 0-6 6-6h6.200z"/><path transform="translate(500 300)" d="M27.400 8.600h2.900v24.300q0 6-6 6h-3.600q-5.500 0-5.500-5.900 0-6 6-6h6.200z"/><path transform="translate(550 300)" d="M27.400 8.600h2.900v24.300q0 6-6 6h-3.600q-5.500 0-5.500-5.900 0-6 6-6h6.200z"/><path transform="translate(600 300)" d="M27.400 8.600h2.900v24.300q0 6-6 6h-3.600q-5.500 0-5.500-5.900 0-6 6-6h6.200z"/><path transform="translate(700 300)" d="M27.400 8.600h2.900v24.300q0 6-6 6h-3.600q-5.500 0-5.500-5.900 0-6 6-6h6.200z"/><path transform="translate(50 350)" d="M27.400 8.600h2.900v24.300q0 6-6 6h-3.600q-5.500 0-5.500-5.900 0-6 6-6h6.200z"/><path transform="translate(100 350)" d="M27.400 8.600h2.900v24.300q0 6-6 6h-3.600q-5.500 0-5.500-5.900 0-6 6-6h6.200z"/><path transform="translate(150 350)" d="M27.400 8.600h2.900v24.300q0 6-6 6h-3.600q-5.500 0-5.500-5.900 0-6 6-6h6.200z"/><path transform="translate(200 350)" d="M27.400 8.600h2.900v24.300q0 6-6 6h-3.600q-5.500 0-5.500-5.900 0-6 6-6h6.200z"/><path transform="translate(250 350)" d="M27.400 8.600h2.900v24.300q0 6-6 6h-3.600q-5.500 0-5.500-5.900 0-6 6-6h6.200z"/><path transform="translate(300 350)" d="M27.400 8.600h2.900v24.300q0 6-6 6h-3.600q-5.500 0-5.500-5.900 0-6 6-6h6.200z"/><path transform="translate(350 350)" d="M27.400 8.600h2.900v24.300q0 6-6 6h-3.600q-5.500 0-5.500-5.900 0-6 6-6h6.200z"/><path transform="translate(400 350)" d="M27.400 8.600h2.900v24.300q0 6-6 6h-3.600q-5.500 0-5.500-5.900 0-6 6-6h6.200z"/><path transform="translate(450 350)" d="M27.400 8.600h2.900v24.300q0 6-6 6h-3.600q-5.500 0-5.500-5.900 0-6 6-6h6.200z"/><path transform="translate(500 350)" d="M27.400 8.600h2.900v24.300q0 6-6 6h-3.600q-5.500 0-5.500-5.900 0-6 6-6h6.200z"/><path transform="translate(550 350)" d="M27.400 8.600h2.900v24.300q0 6-6 6h-3.600q-5.500 0-5.500-5.900 0-6 6-6h6.200z"/><path transform="translate(600 350)" d="M27.400 8.600h2.900v24.300q0 6-6 6h-3.600q-5.500 0-5.500-5.900 0-6 6-6h6.200z"/><path transform="translate(700 350)" d="M27.400 8.600h2.900v24.300q0 6-6 6h-3.600q-5.500 0-5.500-5.900 0-6 6-6h6.200z"/><path transform="translate(50 400)" d="M27.400 8.600h2.900v24.300q0 6-6 6h-3.600q-5.500 0-5.500-5.900 0-6 6-6h6.200z"/><path transform="translate(100 400)" d="M27.400 8.600h2.900v24.300q0 6-6 6h-3.600q-5.500 0-5.500-5.900 0-6 6-6h6.200z"/><path transform="translate(150 400)" d="M27.400 8.600h2.900v24.300q0 6-6 6h-3.600q-5.500 0-5.500-5.900 0-6 6-6h6.200z"/><path transform="translate(200 400)" d="M27.400 8.600h2.900v24.300q0 6-6 6h-3.600q-5.500 0-5.500-5.900 0-6 6-6h6.200z"/><path transform="translate(250 400)" d="M27.400 8.600h2.900v24.300q0 6-6 6h-3.600q-5.500 0-5.500-5.900 0-6 6-6h6.200z"/><path transform="translate(300 400)" d="M27.400 8.600h2.900v24.300q0 6-6 6h-3.600q-5.500 0-5.500-5.900 0-6 6-6h6.200z"/><path transform="translate(350 400)" d="M27.400 8.600h2.900v24.300q0 6-6 6h-3.600q-5.500 0-5.500-5.900 0-6 6-6h6.200z"/><path transform="translate(400 400)" d="M27.400 8.600h2.900v24.300q0 6-6 6h-3.600q-5.500 0-5.500-5.900 0-6 6-6h6.200z"/><path transform="translate(450 400)" d="M27.400 8.600h2.900v24.300q0 6-6 6h-3.600q-5.500 0-5.500-5.900 0-6 6-6h6.200z"/><path transform="translate(500 400)" d="M27.400 8.600h2.900v24.300q0 6-6 6h-3.600q-5.500 0-5.500-5.900 0-6 6-6h6.200z"/><path transform="translate(550 400)" d="M27.400 8.600h2.900v24.300q0 6-6 6h-3.600q-5.500 0-5.500-5.900 0-6 6-6h6.200z"/><path transform="translate(600 400)" d="M27.400 8.600h2.900v24.300q0 6-6 6h-3.600q-5.500 0-5.500-5.900 0-6 6-6h6.200z"/><path transform="translate(650 400)" d="M27.400 8.600h2.900v24.300q0 6-6 6h-3.600q-5.500 0-5.500-5.900 0-6 6-6h6.200z"/><path transform="translate(700 400)" d="M27.400 8.600h2.900v24.300q0 6-6 6h-3.600q-5.500 0-5.500-5.900 0-6 6-6h6.200z"/></g></svg>
<div style="left:628.3px;top:383.4px;width:638.4px;height:1.7px;background:#d6c0ea;"></div>
<div style="left:628.3px;top:782.2px;width:638.4px;height:1.7px;background:#d6c0ea;"></div>
<div style="left:628.3px;top:383.4px;width:1.9px;height:400.5px;background:#d6c0ea;"></div>
<div style="left:1265px;top:383.4px;width:1.7px;height:400.5px;background:#d6c0ea;"></div>
<div style="left:476.7px;top:949px;width:1px;height:24.5px;background:#2626b8;"></div>
<div style="left:477px;top:972.7px;width:25px;height:1px;background:#b82626;"></div>
<svg style="left:526px;top:967px" width="42" height="8" viewBox="0 0 42 8" fill="none" stroke="#c4c4c4" stroke-width="1"><path d="M1.500 4.500v2h39v-2"/></svg>
<span class="t" style="left:493.3px;top:107.00px;font-size:13px;color:#d0d0d0;transform:scaleX(0.9552);">Right</span>
<span class="t" style="left:565.3px;top:107.00px;font-size:13px;color:#d0d0d0;transform:scaleX(0.9975);">Lit</span>
<span class="t" style="left:602.3px;top:107.00px;font-size:13px;color:#d0d0d0;transform:scaleX(0.9529);">Show</span>
<span class="t" style="left:454px;top:141.50px;font-size:13px;color:#ffffff;transform:scaleX(0.9796);text-shadow:1px 1px 1px #000;">Collision Geometry (baked)</span>
<span class="t" style="left:460.3px;top:159.50px;font-size:13px;color:#ecec3c;transform:scaleX(0.9705);text-shadow:1px 1px 1px #000;">Warning: Collision is enabled but there are no shapes</span>
<span class="t" style="left:454px;top:177.50px;font-size:13px;color:#ffffff;transform:scaleX(0.9734);text-shadow:1px 1px 1px #000;">Render Geometry (baked)</span>
<span class="t" style="left:460.3px;top:195.50px;font-size:13px;color:#ffffff;transform:scaleX(0.9638);text-shadow:1px 1px 1px #000;">Sections: 1</span>
<span class="t" style="left:460.3px;top:213.50px;font-size:13px;color:#ffffff;transform:scaleX(0.9879);text-shadow:1px 1px 1px #000;">Triangles: 320 (Masked)</span>
<span class="t" style="left:454px;top:231.50px;font-size:13px;color:#ffffff;transform:scaleX(0.9748);text-shadow:1px 1px 1px #000;">Approx. Size: 1600x4x1000</span>
<span class="t" style="left:1277.5px;top:107.00px;font-size:13px;color:#d0d0d0;transform:scaleX(0.9469);">10</span>
<span class="t" style="left:1332.3px;top:107.00px;font-size:13px;color:#d0d0d0;transform:scaleX(0.8896);">10°</span>
<span class="t" style="left:1395.2px;top:107.00px;font-size:13px;color:#d0d0d0;transform:scaleX(0.9758);">0.25</span>
<span class="t" style="left:1457.2px;top:107.00px;font-size:13px;color:#d0d0d0;transform:scaleX(0.9676);">4</span>
<span class="t" style="left:480.6px;top:937.50px;font-size:12px;color:#2a2ac4;font-weight:700;transform:scaleX(1.0167);">z</span>
<span class="t" style="left:505.7px;top:963.00px;font-size:12px;color:#c42a2a;font-weight:700;transform:scaleX(1.0019);">x</span>
<span class="t" style="left:549px;top:957.20px;font-size:11px;color:#c4c4c4;transform:scaleX(0.9292);">1m</span>
<span class="t" style="left:1144px;top:944.80px;font-size:63px;color:#5a5a5a;font-weight:700;transform:scaleX(0.8284);-webkit-text-stroke:1.800px #5a5a5a;">Beta preview</span>
</main>
<aside class="g" aria-label="Details panel">
<div style="left:1483px;top:102px;width:433px;height:25px;background:#151515;"></div>
<div style="left:1483px;top:102px;width:159px;height:25px;background:#242424;border-radius:4px 4px 0 0;"></div>
<div style="left:1485px;top:101.5px;width:155px;height:1.5px;background:transparent;background:linear-gradient(90deg,rgba(31,95,174,0) 0%,rgba(31,95,174,.55) 35%,rgba(31,95,174,.55) 55%,rgba(31,95,174,0) 85%);"></div>
<div style="left:1483px;top:127px;width:433px;height:877px;background:#242424;"></div>
<svg style="left:1487px;top:105px" width="16" height="16" viewBox="0 0 16 16"><path d="M1 2h6M1 5h4M7 14.500h8M1 11.500v3h3" stroke="#9a9a9a" stroke-width="1.200" fill="none"/><path d="M2 13.500 3 10 11.500 1.500 14.500 4.500 6 13z" fill="#e8e8e8"/></svg>
<svg style="left:1620px;top:109.500px" width="8" height="8" viewBox="0 0 8 8"><path d="M1 1 7 7M7 1 1 7" stroke="#c0c0c0" stroke-width="1.500"/></svg>
<div style="left:1493.3px;top:137.3px;width:362.7px;height:20.5px;background:#0f0f0f;box-sizing:border-box;border:1px solid #383838;border-radius:10.500px;"></div>
<svg style="left:1497px;top:139px" width="18" height="18" viewBox="0 0 18 18" fill="none" stroke="#d8d8d8" stroke-width="1.500"><circle cx="7.800" cy="7.800" r="5.600"/><path d="M12 12l4 4" stroke-linecap="round"/></svg>
<svg style="left:1869px;top:140px" width="16" height="16" viewBox="0 0 16 16" fill="none" stroke="#d8d8d8"><rect x="1.500" y="1.700" width="13" height="12.600" stroke-width="1.600"/><path d="M1.500 3h13" stroke-width="2.200"/><path d="M1.500 6.500h13M1.500 10.400h13M6 4v10" stroke-width="1.300"/></svg>
<svg style="left:1892px;top:139px" width="18" height="18" viewBox="0 0 18 18" fill="none" stroke="#d4d4d4"><circle cx="9.100" cy="8.800" r="4.300" stroke-width="1.800"/><circle cx="9.100" cy="8.800" r="6.300" stroke-width="2.400" stroke-dasharray="2.100 2.848" stroke-dashoffset="1.050"/><circle cx="9.100" cy="8.800" r="1.600" fill="#6a6a6a" stroke="none"/></svg>
<div style="left:1485px;top:167px;width:412px;height:26px;background:#2f2f2f;"></div>
<svg style="left:1489px;top:176.0px" width="12" height="8" viewBox="0 0 12 8"><path d="M1 1.200h10L6 7z" fill="#8a8a8a"/></svg>
<div style="left:1485px;top:193px;width:412px;height:1px;background:#1a1a1a;"></div>
<div style="left:1874px;top:193px;width:1px;height:161px;background:#1a1a1a;"></div>
<div style="left:1507px;top:207px;width:367px;height:114.5px;background:#1a1a1a;"></div>
<div style="left:1507px;top:207.3px;width:367px;height:23.4px;background:#6bdbff;"></div>
<svg style="left:1512px;top:213px" width="15" height="11" viewBox="0 0 15 11"><path d="M.500 5.500Q7.500-2.500 14.500 5.500 7.500 12.500.500 5.500z" fill="#0a2a38"/><circle cx="7.500" cy="5" r="2.300" fill="#6bdbff"/><circle cx="8" cy="4.800" r="1.100" fill="#0a2a38"/></svg>
<svg style="left:1510px;top:328px" width="18" height="20" viewBox="0 0 18 20" fill="none"><path d="M2.800 10.600 9 4.600 15.200 10.600" stroke="#2c5c30" stroke-width="4.600"/><path d="M2.800 9.600 9 3.600 15.200 9.600" stroke="#8fc892" stroke-width="3"/><path d="M9.300 11v6.500M6 14.200h6.600" stroke="#b8b0b4" stroke-width="2.300"/></svg>
<svg style="left:1543px;top:331px" width="12" height="13" viewBox="0 0 12 13" fill="none" stroke="#3d7f45" stroke-width="1.600"><path d="M6 12.500V1.500M1.500 6 6 1.500 10.500 6"/></svg>
<svg style="left:1571px;top:331px" width="12" height="13" viewBox="0 0 12 13" fill="none" stroke="#3d7f45" stroke-width="1.600"><path d="M6 .5V11.500M1.500 7 6 11.500 10.500 7"/></svg>
<svg style="left:1597px;top:330px" width="17" height="16" viewBox="0 0 17 16"><rect x="0" y="0" width="13.500" height="13.500" fill="#a8a8a8"/><rect x="2.300" y="2.300" width="14" height="13.700" fill="#d0d0d0"/></svg>
<svg style="left:1623.500px;top:329.500px" width="15" height="16" viewBox="0 0 15 16"><path d="M2.500 3.500 12.500 13.500M12.500 3.500 2.500 13.500" stroke="#3c1414" stroke-width="4.400"/><path d="M2.500 2.500 12.500 12.500M12.500 2.500 2.500 12.500" stroke="#c48e8a" stroke-width="3.400"/></svg>
<div style="left:1485px;top:354px;width:412px;height:1px;background:#1a1a1a;"></div>
<div style="left:1485px;top:355px;width:412px;height:26px;background:#2f2f2f;"></div>
<svg style="left:1489px;top:364.0px" width="12" height="8" viewBox="0 0 12 8"><path d="M1 1.200h10L6 7z" fill="#8a8a8a"/></svg>
<div style="left:1485px;top:381px;width:412px;height:1px;background:#1a1a1a;"></div>
<div style="left:1485px;top:408px;width:412px;height:1px;background:#1a1a1a;"></div>
<div style="left:1649px;top:381px;width:1px;height:27px;background:#171717;"></div>
<div style="left:1874px;top:381px;width:1px;height:27px;background:#171717;"></div>
<div style="left:1662.7px;top:386.6px;width:16.3px;height:16.2px;background:#0f0f0f;box-shadow:0 0 0 1px #2e2e2e;border-radius:3px;"></div>
<div style="left:1485px;top:435px;width:412px;height:1px;background:#1a1a1a;"></div>
<div style="left:1649px;top:408px;width:1px;height:27px;background:#171717;"></div>
<div style="left:1874px;top:408px;width:1px;height:27px;background:#171717;"></div>
<div style="left:1662.7px;top:413.6px;width:16.3px;height:16.2px;background:#0f0f0f;box-shadow:0 0 0 1px #2e2e2e;border-radius:3px;"></div>
<div style="left:1485px;top:462px;width:412px;height:1px;background:#1a1a1a;"></div>
<div style="left:1649px;top:435px;width:1px;height:27px;background:#171717;"></div>
<div style="left:1874px;top:435px;width:1px;height:27px;background:#171717;"></div>
<div style="left:1662.7px;top:440.6px;width:16.3px;height:16.2px;background:#0f0f0f;box-shadow:0 0 0 1px #2e2e2e;border-radius:3px;"></div>
<svg style="left:1666.3px;top:444.8px" width="9.500" height="8" viewBox="0 0 11 9"><path d="M1.200 4.800 4 7.400 9.800 1.600" fill="none" stroke="#2d7fe0" stroke-width="2.600"/></svg>
<div style="left:1485px;top:489px;width:412px;height:1px;background:#1a1a1a;"></div>
<div style="left:1649px;top:462px;width:1px;height:27px;background:#171717;"></div>
<div style="left:1874px;top:462px;width:1px;height:27px;background:#171717;"></div>
<div style="left:1506.0px;top:467.6px;width:16.3px;height:16.2px;background:#0f0f0f;box-shadow:0 0 0 1px #2e2e2e;border-radius:3px;"></div>
<div style="left:1662.5px;top:467.3px;width:124px;height:17.7px;background:#1b1b1b;box-shadow:0 0 0 1px #272727;border-radius:4px;"></div>
<div style="left:1485px;top:516px;width:412px;height:1px;background:#1a1a1a;"></div>
<div style="left:1649px;top:489px;width:1px;height:27px;background:#171717;"></div>
<div style="left:1874px;top:489px;width:1px;height:27px;background:#171717;"></div>
<div style="left:1506.0px;top:494.6px;width:16.3px;height:16.2px;background:#0f0f0f;box-shadow:0 0 0 1px #2e2e2e;border-radius:3px;"></div>
<div style="left:1662.5px;top:494.3px;width:124px;height:17.7px;background:#1b1b1b;box-shadow:0 0 0 1px #272727;border-radius:4px;"></div>
<div style="left:1485px;top:543px;width:412px;height:1px;background:#1a1a1a;"></div>
<div style="left:1649px;top:516px;width:1px;height:27px;background:#171717;"></div>
<div style="left:1874px;top:516px;width:1px;height:27px;background:#171717;"></div>
<svg style="left:1491px;top:524.5px" width="8" height="11" viewBox="0 0 8 11"><path d="M1 .5v10L7.500 5.500z" fill="#8a8a8a"/></svg>
<div style="left:1662.8px;top:519.8px;width:119px;height:20.5px;background:#ffffff;border-radius:4px;"></div>
<div style="left:1485px;top:544px;width:412px;height:26px;background:#2f2f2f;"></div>
<svg style="left:1489px;top:553.0px" width="12" height="8" viewBox="0 0 12 8"><path d="M1 1.200h10L6 7z" fill="#8a8a8a"/></svg>
<div style="left:1485px;top:570px;width:412px;height:1px;background:#1a1a1a;"></div>
<div style="left:1485px;top:597px;width:412px;height:1px;background:#1a1a1a;"></div>
<div style="left:1649px;top:570px;width:1px;height:27px;background:#171717;"></div>
<div style="left:1874px;top:570px;width:1px;height:27px;background:#171717;"></div>
<div style="left:1662.5px;top:575.3px;width:124px;height:17.7px;background:#0f0f0f;box-shadow:0 0 0 1px #303030;border-radius:4px;"></div>
<svg style="left:1879px;top:578px" width="13" height="11" viewBox="0 0 13 11" fill="none" stroke="#c8c8c8" stroke-width="1.500"><path d="M4.500 1 1.200 4.200 4.500 7.400M1.500 4.200H8.500a3.300 3.300 0 0 1 0 6.600H7"/></svg>
<div style="left:1485px;top:624px;width:412px;height:1px;background:#1a1a1a;"></div>
<div style="left:1649px;top:597px;width:1px;height:27px;background:#171717;"></div>
<div style="left:1874px;top:597px;width:1px;height:27px;background:#171717;"></div>
<div style="left:1662.5px;top:602.3px;width:124px;height:17.7px;background:#0f0f0f;box-shadow:0 0 0 1px #303030;border-radius:4px;"></div>
<svg style="left:1879px;top:605px" width="13" height="11" viewBox="0 0 13 11" fill="none" stroke="#c8c8c8" stroke-width="1.500"><path d="M4.500 1 1.200 4.200 4.500 7.400M1.500 4.200H8.500a3.300 3.300 0 0 1 0 6.600H7"/></svg>
<div style="left:1485px;top:651px;width:412px;height:1px;background:#1a1a1a;"></div>
<div style="left:1649px;top:624px;width:1px;height:27px;background:#171717;"></div>
<div style="left:1874px;top:624px;width:1px;height:27px;background:#171717;"></div>
<div style="left:1662.5px;top:629.3px;width:124px;height:17.7px;background:#0f0f0f;box-shadow:0 0 0 1px #303030;border-radius:4px;"></div>
<svg style="left:1879px;top:632px" width="13" height="11" viewBox="0 0 13 11" fill="none" stroke="#c8c8c8" stroke-width="1.500"><path d="M4.500 1 1.200 4.200 4.500 7.400M1.500 4.200H8.500a3.300 3.300 0 0 1 0 6.600H7"/></svg>
<div style="left:1485px;top:678px;width:412px;height:1px;background:#1a1a1a;"></div>
<div style="left:1649px;top:651px;width:1px;height:27px;background:#171717;"></div>
<div style="left:1874px;top:651px;width:1px;height:27px;background:#171717;"></div>
<div style="left:1662.5px;top:656.3px;width:124px;height:17.7px;background:#0f0f0f;box-shadow:0 0 0 1px #303030;border-radius:4px;"></div>
<svg style="left:1879px;top:659px" width="13" height="11" viewBox="0 0 13 11" fill="none" stroke="#c8c8c8" stroke-width="1.500"><path d="M4.500 1 1.200 4.200 4.500 7.400M1.500 4.200H8.500a3.300 3.300 0 0 1 0 6.600H7"/></svg>
<div style="left:1485px;top:705px;width:412px;height:1px;background:#1a1a1a;"></div>
<div style="left:1649px;top:678px;width:1px;height:27px;background:#171717;"></div>
<div style="left:1874px;top:678px;width:1px;height:27px;background:#171717;"></div>
<div style="left:1662.5px;top:683.3px;width:124px;height:17.7px;background:#0f0f0f;box-shadow:0 0 0 1px #303030;border-radius:4px;"></div>
<div style="left:1485px;top:732px;width:412px;height:1px;background:#1a1a1a;"></div>
<div style="left:1649px;top:705px;width:1px;height:27px;background:#171717;"></div>
<div style="left:1874px;top:705px;width:1px;height:27px;background:#171717;"></div>
<div style="left:1662.5px;top:710.3px;width:124px;height:17.7px;background:#0f0f0f;box-shadow:0 0 0 1px #303030;border-radius:4px;"></div>
<div style="left:1485px;top:790px;width:412px;height:1px;background:#1a1a1a;"></div>
<div style="left:1649px;top:732px;width:1px;height:58px;background:#171717;"></div>
<div style="left:1874px;top:732px;width:1px;height:58px;background:#171717;"></div>
<div style="left:1662.5px;top:737.5px;width:49px;height:48px;background:#0f0f0f;border-radius:3px;"></div>
<div style="left:1662.5px;top:783.5px;width:49px;height:2px;background:#3fa535;border-radius:0 0 3px 3px;"></div>
<svg style="left:1666px;top:740px" width="44" height="44" viewBox="0 0 44 44"><ellipse cx="22" cy="21.800" rx="18.500" ry="20.300" fill="#e6e6e6"/><path d="M22 1.500v40.600M3.500 21.800h37" stroke="#cfcfcf" stroke-width="1"/></svg>
<div style="left:1721.5px;top:737.8px;width:149.5px;height:20.2px;background:#0f0f0f;box-shadow:0 0 0 1px #303030;border-radius:4px;"></div>
<svg style="left:1849px;top:744px" width="11" height="7" viewBox="0 0 11 7"><path d="M1 1 5.500 5.500 10 1" fill="none" stroke="#d8d8d8" stroke-width="1.600"/></svg>
<svg style="left:1725px;top:763px" width="17" height="17" viewBox="0 0 17 17" fill="none" stroke="#d0d0d0" stroke-width="1.500"><path d="M13.500 3.200A7 7 0 1 0 13.500 13.800"/><path d="M15.500 8.500H5M8.500 5 5 8.500 8.500 12"/></svg>
<svg style="left:1751px;top:762px" width="18" height="18" viewBox="0 0 18 18"><path d="M1 1h5l2 2.500H1z" fill="#9a9a9a"/><path d="M1 4h13.500v3.500a5.500 5.500 0 0 0-7 7H1z" fill="#d0d0d0"/><circle cx="12.500" cy="11" r="3.200" fill="none" stroke="#d0d0d0" stroke-width="1.500"/><path d="M10.200 13.300 7.500 16.500" stroke="#d0d0d0" stroke-width="1.500"/></svg>
<div style="left:1485px;top:817px;width:412px;height:1px;background:#1a1a1a;"></div>
<div style="left:1649px;top:790px;width:1px;height:27px;background:#171717;"></div>
<div style="left:1874px;top:790px;width:1px;height:27px;background:#171717;"></div>
<div style="left:1662.5px;top:794px;width:124px;height:20px;background:#0f0f0f;box-shadow:0 0 0 1px #303030;border-radius:4px;"></div>
<svg style="left:1763px;top:800.5px" width="11" height="7" viewBox="0 0 11 7"><path d="M1 1 5.500 5.500 10 1" fill="none" stroke="#d8d8d8" stroke-width="1.600"/></svg>
<div style="left:1485px;top:844px;width:412px;height:1px;background:#1a1a1a;"></div>
<div style="left:1649px;top:817px;width:1px;height:27px;background:#171717;"></div>
<div style="left:1874px;top:817px;width:1px;height:27px;background:#171717;"></div>
<div style="left:1662.5px;top:822.3px;width:124px;height:17.7px;background:#1b1b1b;box-shadow:0 0 0 1px #272727;border-radius:4px;"></div>
<div style="left:1485px;top:871px;width:412px;height:1px;background:#1a1a1a;"></div>
<div style="left:1649px;top:844px;width:1px;height:27px;background:#171717;"></div>
<div style="left:1874px;top:844px;width:1px;height:27px;background:#171717;"></div>
<svg style="left:1491px;top:852.5px" width="8" height="11" viewBox="0 0 8 11"><path d="M1 .5v10L7.500 5.500z" fill="#8a8a8a"/></svg>
<div style="left:1662.8px;top:847.8px;width:119px;height:20.5px;background:#3a3a3a;border-radius:4px;"></div>
<div style="left:1485px;top:898px;width:412px;height:1px;background:#1a1a1a;"></div>
<div style="left:1649px;top:871px;width:1px;height:27px;background:#171717;"></div>
<div style="left:1874px;top:871px;width:1px;height:27px;background:#171717;"></div>
<svg style="left:1491px;top:879.5px" width="8" height="11" viewBox="0 0 8 11"><path d="M1 .5v10L7.500 5.500z" fill="#8a8a8a"/></svg>
<div style="left:1662.8px;top:874.8px;width:119px;height:20.5px;background:#9b9b9b;border-radius:4px;"></div>
<svg style="left:1879px;top:879px" width="13" height="11" viewBox="0 0 13 11" fill="none" stroke="#c8c8c8" stroke-width="1.500"><path d="M4.500 1 1.200 4.200 4.500 7.400M1.500 4.200H8.500a3.300 3.300 0 0 1 0 6.600H7"/></svg>
<div style="left:1485px;top:925px;width:412px;height:1px;background:#1a1a1a;"></div>
<div style="left:1649px;top:898px;width:1px;height:27px;background:#171717;"></div>
<div style="left:1874px;top:898px;width:1px;height:27px;background:#171717;"></div>
<svg style="left:1491px;top:906.5px" width="8" height="11" viewBox="0 0 8 11"><path d="M1 .5v10L7.500 5.500z" fill="#8a8a8a"/></svg>
<div style="left:1662.8px;top:901.8px;width:119px;height:20.5px;background:#fe0000;border-radius:4px;"></div>
<div style="left:1485px;top:952px;width:412px;height:1px;background:#1a1a1a;"></div>
<div style="left:1649px;top:925px;width:1px;height:27px;background:#171717;"></div>
<div style="left:1874px;top:925px;width:1px;height:27px;background:#171717;"></div>
<div style="left:1662.5px;top:930.3px;width:124px;height:17.7px;background:#0f0f0f;box-shadow:0 0 0 1px #303030;border-radius:4px;"></div>
<div style="left:1485px;top:979px;width:412px;height:1px;background:#1a1a1a;"></div>
<div style="left:1649px;top:952px;width:1px;height:27px;background:#171717;"></div>
<div style="left:1874px;top:952px;width:1px;height:27px;background:#171717;"></div>
<div style="left:1662.5px;top:957.3px;width:124px;height:17.7px;background:#0f0f0f;box-shadow:0 0 0 1px #303030;border-radius:4px;"></div>
<div style="left:1485px;top:1006px;width:412px;height:1px;background:#1a1a1a;"></div>
<div style="left:1649px;top:979px;width:1px;height:27px;background:#171717;"></div>
<div style="left:1874px;top:979px;width:1px;height:27px;background:#171717;"></div>
<div style="left:1662.5px;top:984.3px;width:124px;height:17.7px;background:#0f0f0f;box-shadow:0 0 0 1px #303030;border-radius:4px;"></div>
<div style="left:1483px;top:1004px;width:437px;height:4px;background:#151515;"></div>
<div style="left:1897px;top:167px;width:19px;height:837px;background:#242424;"></div>
<div style="left:1900px;top:167px;width:13px;height:837px;background:#1a1a1a;"></div>
<div style="left:1901.3px;top:169px;width:7.9px;height:615.5px;background:#575757;border-radius:4px;"></div>
<div style="left:1916px;top:98px;width:4px;height:909px;background:#151515;"></div>
<span class="t" style="left:1509.3px;top:103.50px;font-size:13px;color:#e8e8e8;transform:scaleX(0.9811);">Details</span>
<span class="t" style="left:1521.7px;top:136.50px;font-size:13px;color:#555555;transform:scaleX(0.9854);">Search</span>
<span class="t" style="left:1507.3px;top:168.90px;font-size:11.5px;color:#d8d8d8;font-weight:700;transform:scaleX(0.9321);">Tile Map</span>
<span class="t" style="left:1859.3px;top:169.50px;font-size:13px;color:#c8c8c8;transform:scaleX(1.0149);">Asset</span>
<span class="t" style="left:1507.3px;top:190.00px;font-size:11.5px;color:#c0c0c0;transform:scaleX(1.0239);">Tile layer list</span>
<span class="t" style="left:1535.7px;top:208.50px;font-size:13px;color:#d8f6ff;transform:scaleX(0.9731);">map.1.intro</span>
<span class="t" style="left:1507.3px;top:356.90px;font-size:11.5px;color:#d8d8d8;font-weight:700;transform:scaleX(0.9127);">Selected Layer</span>
<span class="t" style="left:1828px;top:357.50px;font-size:13px;color:#c8c8c8;transform:scaleX(0.9839);">map.1.intro</span>
<span class="t" style="left:1507.3px;top:384.30px;font-size:11.5px;color:#c0c0c0;transform:scaleX(0.9654);">Hidden in Editor</span>
<span class="t" style="left:1507.3px;top:411.30px;font-size:11.5px;color:#c0c0c0;transform:scaleX(0.9469);">Hidden in Game</span>
<span class="t" style="left:1507.3px;top:438.30px;font-size:11.5px;color:#c0c0c0;transform:scaleX(0.9674);">Layer Collides</span>
<span class="t" style="left:1527.2px;top:465.30px;font-size:11.5px;color:#5c5c5c;transform:scaleX(0.9737);">Collision Thickness O...</span>
<span class="t" style="left:1671.3px;top:464.80px;font-size:11.5px;color:#6a6a6a;transform:scaleX(0.9245);">50.0</span>
<span class="t" style="left:1527.2px;top:492.30px;font-size:11.5px;color:#5c5c5c;transform:scaleX(0.9800);">Collision Offset Overri...</span>
<span class="t" style="left:1671.3px;top:491.80px;font-size:11.5px;color:#6a6a6a;transform:scaleX(0.9062);">0.0</span>
<span class="t" style="left:1507.3px;top:519.30px;font-size:11.5px;color:#c0c0c0;transform:scaleX(0.9453);">Layer Color</span>
<span class="t" style="left:1507.3px;top:545.90px;font-size:11.5px;color:#d8d8d8;font-weight:700;transform:scaleX(0.8982);">Setup</span>
<span class="t" style="left:1507.3px;top:573.30px;font-size:11.5px;color:#c0c0c0;transform:scaleX(0.9642);">Map Width</span>
<span class="t" style="left:1671.3px;top:572.80px;font-size:11.5px;color:#ffffff;transform:scaleX(0.8987);">16</span>
<span class="t" style="left:1507.3px;top:600.30px;font-size:11.5px;color:#c0c0c0;transform:scaleX(0.9743);">Map Height</span>
<span class="t" style="left:1671.3px;top:599.80px;font-size:11.5px;color:#ffffff;transform:scaleX(0.8987);">10</span>
<span class="t" style="left:1507.3px;top:627.30px;font-size:11.5px;color:#c0c0c0;transform:scaleX(0.9842);">Tile Width</span>
<span class="t" style="left:1671.3px;top:626.80px;font-size:11.5px;color:#ffffff;transform:scaleX(0.9121);">100</span>
<span class="t" style="left:1507.3px;top:654.30px;font-size:11.5px;color:#c0c0c0;transform:scaleX(0.9991);">Tile Height</span>
<span class="t" style="left:1671.3px;top:653.80px;font-size:11.5px;color:#ffffff;transform:scaleX(0.9121);">100</span>
<span class="t" style="left:1507.3px;top:681.30px;font-size:11.5px;color:#c0c0c0;transform:scaleX(0.9628);">Pixels Per Unreal Unit</span>
<span class="t" style="left:1671.3px;top:680.80px;font-size:11.5px;color:#ffffff;transform:scaleX(0.7812);">1.0</span>
<span class="t" style="left:1507.3px;top:708.30px;font-size:11.5px;color:#c0c0c0;transform:scaleX(0.9615);">Separation Per Layer</span>
<span class="t" style="left:1671.3px;top:707.80px;font-size:11.5px;color:#ffffff;transform:scaleX(0.8438);">4.0</span>
<span class="t" style="left:1507.3px;top:750.80px;font-size:11.5px;color:#c0c0c0;transform:scaleX(1.0121);">Material</span>
<span class="t" style="left:1729.4px;top:737.80px;font-size:11.5px;color:#d8d8d8;transform:scaleX(0.9879);clip-path:inset(0 17.51px 0 0);">MaskedUnlitSpriteMaterial</span>
<span class="t" style="left:1507.3px;top:793.30px;font-size:11.5px;color:#c0c0c0;transform:scaleX(0.9770);">Projection Mode</span>
<span class="t" style="left:1670.1px;top:792.90px;font-size:11.5px;color:#d8d8d8;transform:scaleX(0.9524);">Orthogonal</span>
<span class="t" style="left:1507.3px;top:820.30px;font-size:11.5px;color:#c0c0c0;transform:scaleX(0.9642);">Hex Side Length</span>
<span class="t" style="left:1671.3px;top:819.80px;font-size:11.5px;color:#6a6a6a;transform:scaleX(0.9366);">0</span>
<span class="t" style="left:1507.3px;top:847.30px;font-size:11.5px;color:#c0c0c0;transform:scaleX(0.9504);">Background Color</span>
<span class="t" style="left:1507.3px;top:874.30px;font-size:11.5px;color:#c0c0c0;transform:scaleX(0.9565);">Tile Grid Color</span>
<span class="t" style="left:1507.3px;top:901.30px;font-size:11.5px;color:#c0c0c0;transform:scaleX(0.9855);">Multi Tile Grid Color</span>
<span class="t" style="left:1507.3px;top:928.30px;font-size:11.5px;color:#c0c0c0;transform:scaleX(0.9913);">Multi Tile Grid Width</span>
<span class="t" style="left:1671.3px;top:927.80px;font-size:11.5px;color:#ffffff;transform:scaleX(0.9366);">0</span>
<span class="t" style="left:1507.3px;top:955.30px;font-size:11.5px;color:#c0c0c0;transform:scaleX(0.9978);">Multi Tile Grid Height</span>
<span class="t" style="left:1671.3px;top:954.80px;font-size:11.5px;color:#ffffff;transform:scaleX(0.9366);">0</span>
<span class="t" style="left:1507.3px;top:982.30px;font-size:11.5px;color:#c0c0c0;transform:scaleX(1.0059);">Multi Tile Grid Offset X</span>
<span class="t" style="left:1671.3px;top:981.80px;font-size:11.5px;color:#ffffff;transform:scaleX(0.9366);">0</span>
</aside>
<footer class="g" aria-label="Status bar">
<div style="left:0px;top:1004px;width:1920px;height:37px;background:#151515;"></div>
<div style="left:1.5px;top:1008px;width:129.5px;height:33px;background:#242424;"></div>
<div style="left:134px;top:1008px;width:101px;height:33px;background:#242424;"></div>
<div style="left:238px;top:1008px;width:365px;height:33px;background:#242424;"></div>
<div style="left:606px;top:1008px;width:1156px;height:33px;background:#242424;"></div>
<div style="left:1764px;top:1008px;width:153px;height:33px;background:#242424;"></div>
<svg style="left:10px;top:1015px" width="18" height="18" viewBox="0 0 18 18"><path d="M1 1h5l1.500 2H1z" fill="#8a8a8a"/><path d="M1 4h13v3.500a5.500 5.500 0 0 0-6.500 7.500H1z" fill="#c8c8c8"/><circle cx="12.500" cy="11.500" r="3.300" fill="none" stroke="#c8c8c8" stroke-width="1.500"/><path d="M10.200 13.800 7.500 17" stroke="#c8c8c8" stroke-width="1.500"/></svg>
<svg style="left:145px;top:1016px" width="13" height="16" viewBox="0 0 13 16"><path d="M0 2h2V0h2v2h1.500V0h2v2H9V0h2v2h2v14H0z" fill="#c8c8c8"/><path d="M3 7l3 2.500L3 12M7 12.500h3.500" stroke="#242424" stroke-width="1.400" fill="none"/></svg>
<svg style="left:251px;top:1018px" width="16" height="13" viewBox="0 0 16 13" fill="none" stroke="#c8c8c8" stroke-width="1.300"><rect x=".7" y=".7" width="14.600" height="11.600"/><path d="M3.500 4 6.500 6.500 3.500 9M8 9.500h4"/></svg>
<svg style="left:304px;top:1021px" width="11" height="7" viewBox="0 0 11 7"><path d="M1 1 5.500 5.500 10 1" fill="none" stroke="#c8c8c8" stroke-width="1.600"/></svg>
<div style="left:328.8px;top:1014px;width:265.5px;height:19.7px;background:#0f0f0f;box-shadow:0 0 0 1px #2e2e2e;border-radius:4px;"></div>
<svg style="left:1776px;top:1016px" width="16" height="16" viewBox="0 0 16 16" fill="none" stroke="#d0d0d0" stroke-width="1.600"><circle cx="8" cy="8" r="6.500"/><path d="M3.500 12.500 12.500 3.500"/></svg>
<svg style="left:1904px;top:1029px" width="6" height="6"><path d="M6 0v6H0z" fill="#5a5a5a"/></svg>
<div style="left:48px;top:1040px;width:287px;height:1px;background:#e8e8e8;"></div>
<div style="left:1120px;top:1040px;width:50px;height:1px;background:#8a8a8a;"></div>
<span class="t" style="left:31px;top:1014.50px;font-size:13px;color:#c0c0c0;transform:scaleX(0.9775);">Content Drawer</span>
<span class="t" style="left:163.3px;top:1014.50px;font-size:13px;color:#c0c0c0;transform:scaleX(0.9638);">Output Log</span>
<span class="t" style="left:271.3px;top:1014.50px;font-size:13px;color:#c0c0c0;transform:scaleX(0.9252);">Cmd</span>
<span class="t" style="left:336.7px;top:1014.00px;font-size:12px;color:#505050;font-family:'Liberation Mono',monospace;transform:scaleX(0.9654);">Enter Console Command</span>
<span class="t" style="left:1797px;top:1014.50px;font-size:13px;color:#c0c0c0;transform:scaleX(0.9775);">Source Control Off</span>
</footer>
</body></html>
